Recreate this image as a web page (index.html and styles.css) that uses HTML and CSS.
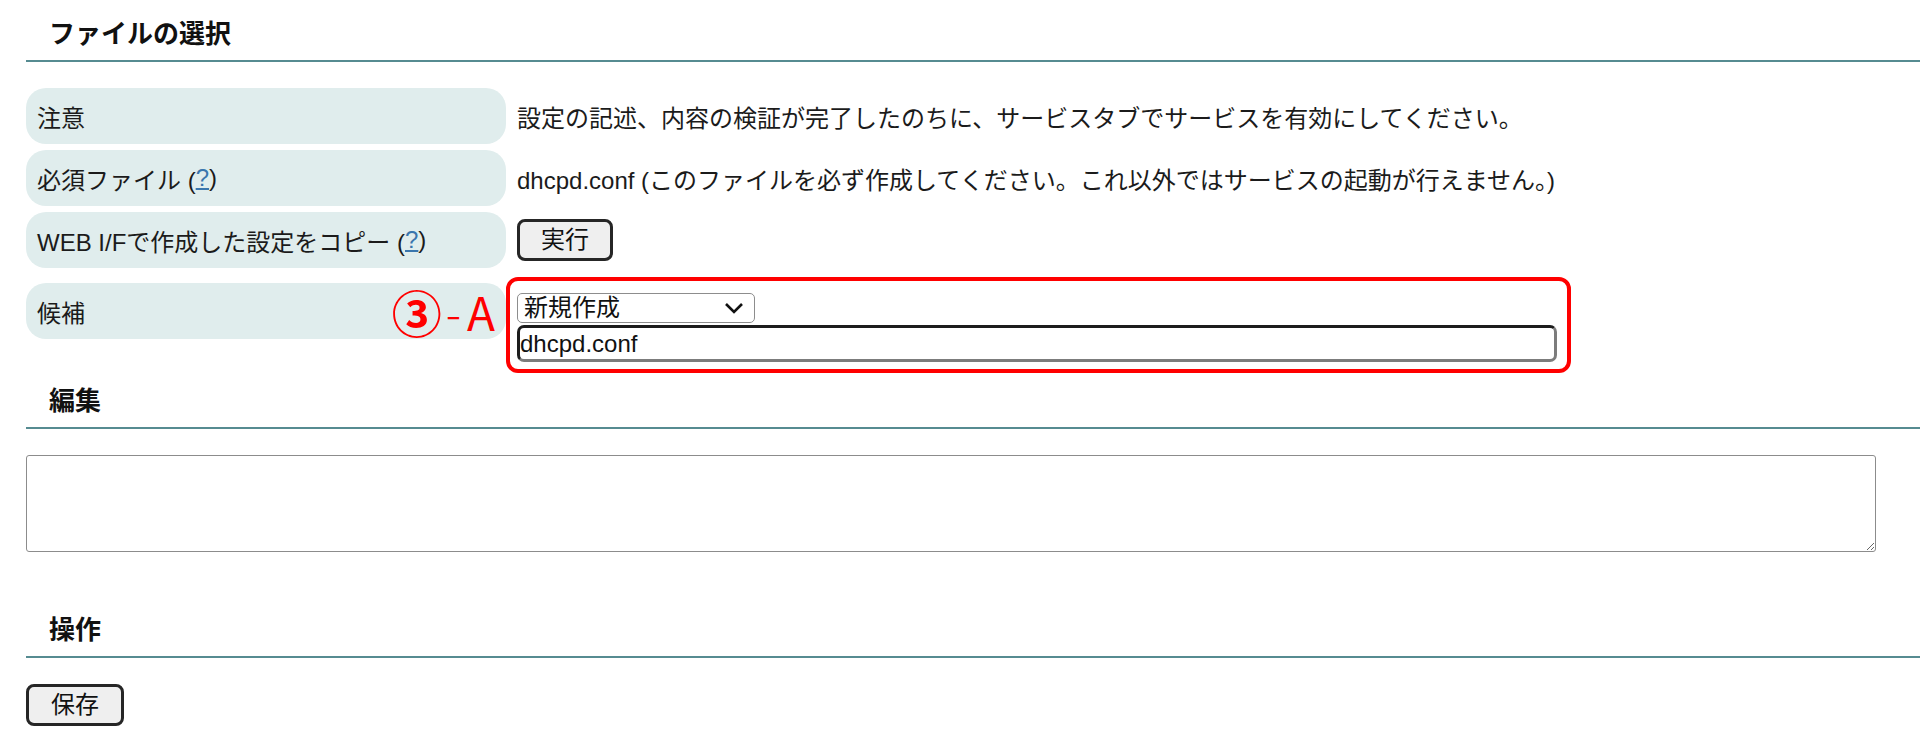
FILE: index.html
```html
<!DOCTYPE html>
<html lang="ja">
<head>
<meta charset="utf-8">
<title>ファイルの選択</title>
<link rel="stylesheet" href="styles.css">
</head>
<body>
<h2 class="sec-title first">ファイルの選択</h2>
<div class="rows">
  <div class="row">
    <div class="label">注意</div>
    <div class="value">設定の記述、内容の検証が完了したのちに、サービスタブでサービスを有効にしてください。</div>
  </div>
  <div class="row">
    <div class="label">必須ファイル (<a class="help" href="#">?</a>)</div>
    <div class="value">dhcpd.conf (このファイルを必ず作成してください。これ以外ではサービスの起動が行えません。)</div>
  </div>
  <div class="row">
    <div class="label">WEB I/Fで作成した設定をコピー (<a class="help" href="#">?</a>)</div>
    <div class="value"><button class="btn btn-run" type="button">実行</button></div>
  </div>
  <div class="row cand">
    <div class="label label-cand">候補<span class="mark"><span class="circ">③</span><span class="dash">-</span>A</span></div>
    <div class="value">
      <div class="annot">
        <div class="select-wrap">
          <select class="select"><option>新規作成</option></select>
          <svg class="chev" width="20" height="12" viewBox="0 0 20 12"><path d="M2 2 L10 10 L18 2" fill="none" stroke="#111" stroke-width="2.6"/></svg>
        </div>
        <input class="fname" type="text" value="dhcpd.conf">
      </div>
    </div>
  </div>
</div>
<h2 class="sec-title">編集</h2>
<textarea class="editor"></textarea>
<h2 class="sec-title ops">操作</h2>
<div class="actions"><button class="btn btn-save" type="button">保存</button></div>
</body>
</html>
```
FILE: styles.css
```css
html, body {
  margin: 0;
  background: #ffffff;
}
body {
  font-family: "Liberation Sans", "Noto Sans CJK JP", sans-serif;
  font-size: 24px;
  color: #1b1b1b;
}
.sec-title {
  margin: 0 0 0 26px;
  padding: 10px 0 8px 23px;
  font-size: 26px;
  line-height: 36px;
  font-weight: 700;
  border-bottom: 2px solid #568b91;
  color: #111;
}
.sec-title.first {
  margin-top: 6px;
}
.sec-title.ops {
  margin-top: 50px;
}
.rows {
  margin: 26px 0 0 26px;
  display: flex;
  flex-direction: column;
  gap: 6px;
}
.row {
  display: flex;
  align-items: center;
  gap: 11px;
}
.label {
  position: relative;
  width: 480px;
  height: 56px;
  flex: none;
  box-sizing: border-box;
  padding-left: 11px;
  background: #e0eded;
  border-radius: 20px;
  display: flex;
  align-items: center;
  white-space: nowrap;
}
.value {
  flex: 1;
  white-space: nowrap;
}
.help {
  color: #3a76ad;
  text-decoration: underline;
}
.btn {
  font-family: "Liberation Sans", "Noto Sans CJK JP", sans-serif;
  font-size: 24px;
  height: 42px;
  padding: 0;
  background: #efefef;
  border: 3px solid #262626;
  border-radius: 8px;
  color: #111;
  line-height: 1;
}
.btn-run {
  width: 96px;
}
.btn-save {
  width: 98px;
}
.row.cand {
  align-items: flex-start;
}
.label-cand {
  margin-top: 9px;
}
.mark {
  position: absolute;
  right: 11px;
  top: 4px;
  display: flex;
  align-items: center;
  font-family: "Noto Sans CJK JP", sans-serif;
  font-size: 46px;
  line-height: 48px;
  font-weight: 400;
  color: #ff0000;
}
.circ {
  font-size: 50px;
  font-weight: 700;
  margin-right: 4px;
}
.dash {
  font-weight: 300;
  margin-right: 6px;
}
.cand .value {
  margin-top: 3px;
}
.annot {
  margin-left: -11px;
  width: 1065px;
  box-sizing: border-box;
  border: 4px solid #ff0000;
  border-radius: 12px;
  padding: 12px 10px 7px 7px;
  display: flex;
  flex-direction: column;
  align-items: flex-start;
  gap: 2px;
}
.select-wrap {
  position: relative;
  width: 238px;
  height: 30px;
}
.select {
  appearance: none;
  -webkit-appearance: none;
  width: 238px;
  height: 30px;
  box-sizing: border-box;
  border: 1px solid #8d8d8d;
  border-radius: 5px;
  background: #fff;
  font-family: "Liberation Sans", "Noto Sans CJK JP", sans-serif;
  font-size: 24px;
  color: #111;
  padding: 0 0 0 6px;
  line-height: 28px;
}
.chev {
  position: absolute;
  right: 11px;
  top: 9px;
  pointer-events: none;
}
.fname {
  width: 1040px;
  height: 37px;
  box-sizing: border-box;
  border-style: solid;
  border-width: 3px;
  border-color: #1c1c1c #7c7c7c #7c7c7c #1c1c1c;
  border-radius: 7px;
  padding: 0;
  font-family: "Liberation Sans", "Noto Sans CJK JP", sans-serif;
  font-size: 24px;
  color: #111;
  outline: none;
}
.editor {
  display: block;
  margin: 26px 0 0 26px;
  width: 1850px;
  height: 97px;
  box-sizing: border-box;
  border: 1px solid #8c8c8c;
  border-radius: 3px;
  font-family: "Liberation Mono", monospace;
  font-size: 16px;
}
.actions {
  margin: 26px 0 0 26px;
}
```
